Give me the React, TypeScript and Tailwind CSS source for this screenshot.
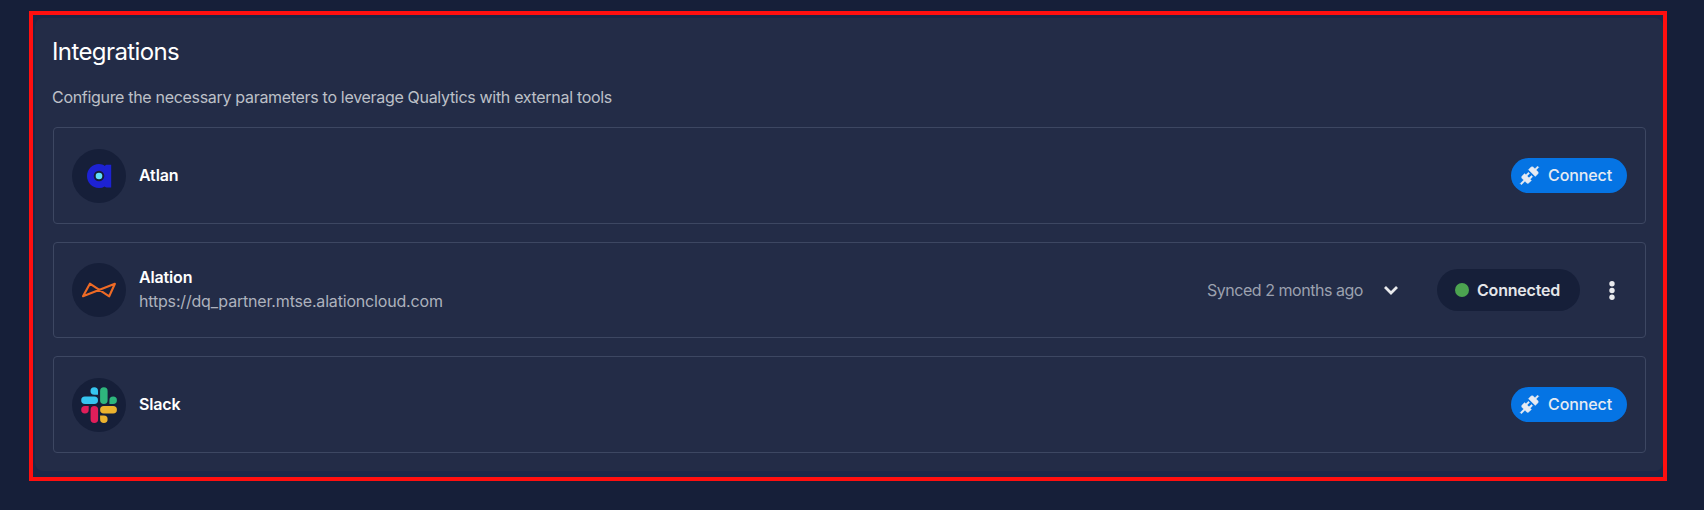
import React from "react";

function Avatar({ children }: { children: React.ReactNode }) {
  return <div className="flex size-[54px] shrink-0 items-center justify-center rounded-full bg-[#161f39]">{children}</div>;
}

function AtlanLogo() {
  return (
    <svg viewBox="0 0 54 54" className="size-[54px]">
      <path fill="#1d22d3" d="M27 15c2.200 0 4.200.7 5.800 1.900.5-.7 1.400-1.100 2.400-1.100h4v22.800h-4c-1 0-1.900-.4-2.400-1.100A11.500 11.500 0 0 1 27 39c-6.800 0-12-5.300-12-12s5.200-12 12-12Z" />
      <circle cx="27" cy="27" r="5.300" fill="#161f39" />
      <circle cx="27" cy="27" r="3.300" fill="#62e1fc" />
    </svg>
  );
}

function AlationLogo() {
  return (
    <svg viewBox="0 0 54 54" className="size-[54px]" fill="none" stroke="#ee6a25" strokeWidth="2.100" strokeLinejoin="round">
      <path d="M17.900 20.700 11 33.300 42.900 20.800 37.200 33.300Z" />
    </svg>
  );
}

function SlackLogo() {
  return (
    <svg viewBox="0 0 54 54" className="size-[54px]">
      <path fill="#36c5f0" d="M22.250 9.200a3.750 3.750 0 0 0 0 7.500H26v-3.750a3.750 3.750 0 0 0-3.750-3.750ZM22.250 18.600h-9.300a3.750 3.750 0 0 0 0 7.500h9.300a3.750 3.750 0 0 0 0-7.500Z" />
      <path fill="#2eb67d" d="M44.900 22.350a3.750 3.750 0 0 0-7.500 0v3.750h3.750a3.750 3.750 0 0 0 3.750-3.750ZM35.600 22.350v-9.400a3.750 3.750 0 0 0-7.500 0v9.400a3.750 3.750 0 0 0 7.500 0Z" />
      <path fill="#ecb22e" d="M31.850 44.900a3.750 3.750 0 0 0 0-7.500H28.100v3.750a3.750 3.750 0 0 0 3.750 3.750ZM31.850 35.600h9.300a3.750 3.750 0 0 0 0-7.500h-9.300a3.750 3.750 0 0 0 0 7.500Z" />
      <path fill="#e01e5a" d="M9.200 31.850a3.750 3.750 0 0 0 7.500 0V28.100h-3.750a3.750 3.750 0 0 0-3.750 3.750ZM18.600 31.850v9.300a3.750 3.750 0 0 0 7.500 0v-9.300a3.750 3.750 0 0 0-7.500 0Z" />
    </svg>
  );
}

function ConnectButton() {
  return (
    <button className="flex h-[35px] w-[116px] items-center rounded-full bg-[#0574e4] pb-px pl-[8px] text-[#e6ebf3]">
      <svg viewBox="0 0 24 24" className="size-[21px] shrink-0" fill="currentColor" stroke="currentColor" strokeWidth="0.500">
        <path d="M21.400 7.500c.8.800.8 2.100 0 2.800l-2.800 2.800-7.800-7.800 2.800-2.800c.8-.8 2.100-.8 2.800 0l1.800 1.800 3-3 1.400 1.400-3 3 1.800 1.800Zm-5.800 5.800-1.400-1.400-2.800 2.800-2.100-2.100 2.800-2.800-1.400-1.400-2.800 2.800-1.500-1.400-2.800 2.800c-.8.800-.8 2.100 0 2.800l1.800 1.800-4 4 1.400 1.400 4-4 1.800 1.800c.8.800 2.100.8 2.800 0l2.800-2.800-1.400-1.400 2.800-2.900Z" />
      </svg>
      <span className="ml-[8px] text-base font-medium tracking-[-0.100px]">Connect</span>
    </button>
  );
}

type RowProps = { logo: React.ReactNode; name: string; url?: string; className: string; children: React.ReactNode };

function Row({ logo, name, url, className, children }: RowProps) {
  return (
    <div className={`flex items-center rounded-[4px] border border-[#3d4762] pl-[18px] ${className}`}>
      <Avatar>{logo}</Avatar>
      <div className="ml-[13px] flex-1 pb-[2px]">
        <div className="text-base leading-6 font-semibold tracking-[-0.150px] text-white">{name}</div>
        {url && <div className="text-base leading-6 tracking-[-0.180px] text-[#adb2bd]">{url}</div>}
      </div>
      {children}
    </div>
  );
}

export default function App() {
  return (
    <div className="h-[510px] bg-[#161f39] pt-[11px] pl-[29px] font-['Inter','Noto_Sans',sans-serif]">
      <div className="h-[470px] w-[1638px] border-4 border-[#ff0f0f] bg-[#1a2747] pt-[3px] pl-[2px]">
        <section className="h-[453px] w-[1628px] rounded-lg bg-[#232c47] px-[18px] pt-[18px]">
          <h1 className="-ml-px text-2xl leading-8 tracking-[-0.600px] text-white">Integrations</h1>
          <p className="mt-[17px] -ml-px text-base leading-6 tracking-[-0.310px] text-[#bdc0c8]">Configure the necessary parameters to leverage Qualytics with external tools</p>
          <div className="mt-[18px] flex w-[1593px] flex-col gap-[18px]">
            <Row logo={<AtlanLogo />} name="Atlan" className="h-[97px] pr-[18px]"><ConnectButton /></Row>
            <Row logo={<AlationLogo />} name="Alation" url="https://dq_partner.mtse.alationcloud.com" className="h-[96px] pr-[21px]">
              <span className="pb-px text-base tracking-[-0.460px] text-[#9ca1af]">Synced 2 months ago</span>
              <svg viewBox="0 0 24 24" className="ml-[16px] size-6" fill="none" stroke="#e9eaed" strokeWidth="2.800"><path d="m6 9 6 6 6-6" /></svg>
              <div className="ml-[34px] flex h-[42px] w-[143px] items-center rounded-full bg-[#161f39] pl-[18px]">
                <span className="size-[14px] rounded-full bg-[#4ca450]" />
                <span className="ml-[8px] pb-px text-base font-semibold tracking-[-0.200px] text-[#e5e6ea]">Connected</span>
              </div>
              <svg viewBox="0 0 24 24" className="ml-[20px] size-6" fill="#e9eaed"><circle cx="12" cy="5.800" r="2.700" /><circle cx="12" cy="12.500" r="2.700" /><circle cx="12" cy="19.200" r="2.700" /></svg>
            </Row>
            <Row logo={<SlackLogo />} name="Slack" className="h-[97px] pr-[18px]"><ConnectButton /></Row>
          </div>
        </section>
      </div>
    </div>
  );
}
